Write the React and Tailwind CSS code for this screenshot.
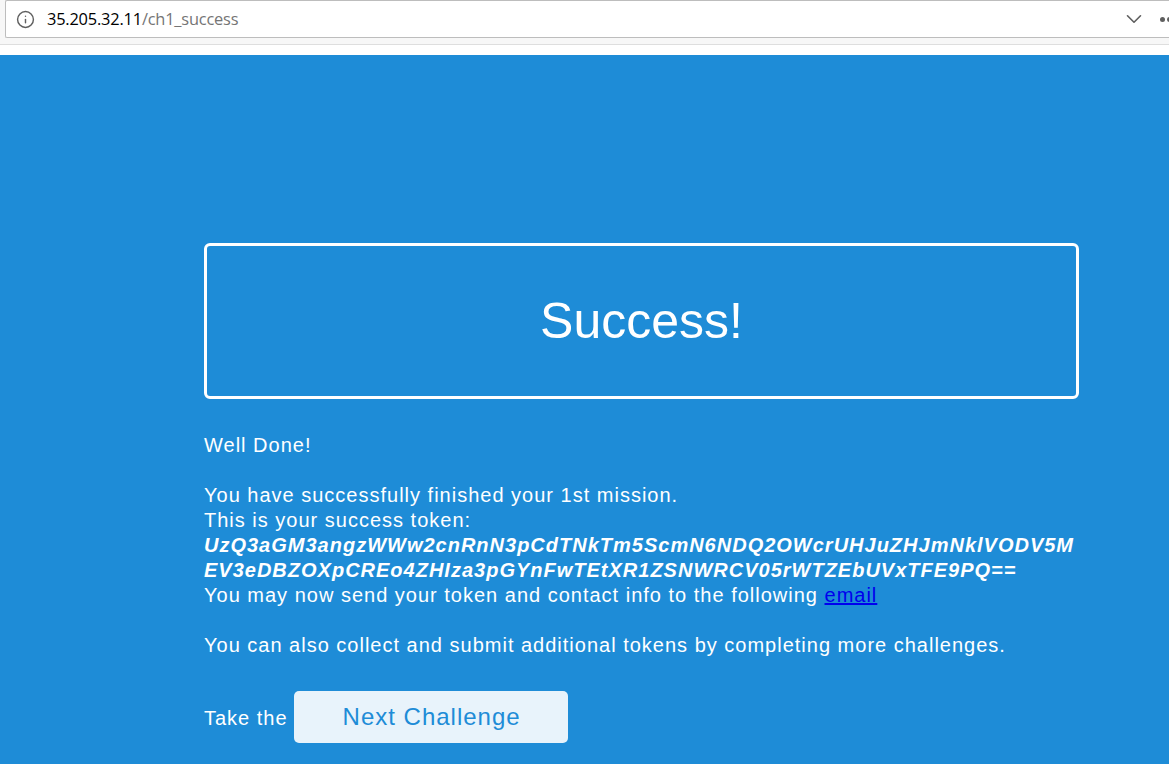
import { ChevronDown, Info } from 'lucide-react';

function AddressBar() {
  return (
    <div className="h-[55px] bg-white shrink-0">
      <div className="h-[45px] bg-[#f7f7f7] border-b border-[#dedede] pl-[5px]">
        <div className="h-[38px] bg-white border border-r-0 border-[#bdbdbd] rounded-l-[2px] flex items-center font-['Open_Sans',sans-serif] text-[16.4px]">
          <Info className="ml-[10px] w-[19px] h-[19px] text-[#5f5f5f]" strokeWidth={1.8} />
          <div className="ml-[12px] tracking-[-0.2px]">
            <span className="text-black">35.205.32.11</span>
            <span className="text-[#757575]">/ch1_success</span>
          </div>
          <ChevronDown className="ml-auto w-[26px] h-[26px] text-[#5f5f5f]" strokeWidth={1.5} />
          <div className="ml-[13px] w-[9px] flex gap-[2px] overflow-hidden">
            <span className="w-[5px] h-[5px] rounded-full bg-[#5f5f5f] shrink-0" />
            <span className="w-[5px] h-[5px] rounded-full bg-[#5f5f5f] shrink-0" />
          </div>
        </div>
      </div>
    </div>
  );
}

export default function App() {
  return (
    <div className="w-[1169px] h-[764px] overflow-hidden flex flex-col bg-[#1e8cd7] font-['Liberation_Sans',Arial,sans-serif]">
      <AddressBar />
      <main className="pl-[204px] pt-[188px] w-[1079px] text-white text-[20px] leading-[25px] tracking-[1px]">
        <div className="w-[875px] h-[156px] border-[3px] border-white rounded-[6px] flex items-center justify-center text-[50px] leading-none tracking-normal">
          Success!
        </div>
        <p className="mt-[34px]">Well Done!</p>
        <p className="mt-[25px]">You have successfully finished your 1st mission.</p>
        <p>This is your success token:</p>
        <p className="font-bold italic break-all">
          UzQ3aGM3angzWWw2cnRnN3pCdTNkTm5ScmN6NDQ2OWcrUHJuZHJmNklVODV5MEV3eDBZOXpCREo4ZHIza3pGYnFwTEtXR1ZSNWRCV05rWTZEbUVxTFE9PQ==
        </p>
        <p>
          You may now send your token and contact info to the following{' '}
          <a href="#email" className="text-[#0000ee] underline">email</a>
        </p>
        <p className="mt-[25px]">You can also collect and submit additional tokens by completing more challenges.</p>
        <div className="mt-[33px] flex items-center gap-[6px]">
          <span className="pt-[2px]">Take the</span>
          <button className="w-[274px] h-[52px] pb-[2px] pl-[2px] bg-[#e8f3fb] text-[#1e8cd7] rounded-[5px] text-[24px] tracking-[1px]">
            Next Challenge
          </button>
        </div>
      </main>
    </div>
  );
}
